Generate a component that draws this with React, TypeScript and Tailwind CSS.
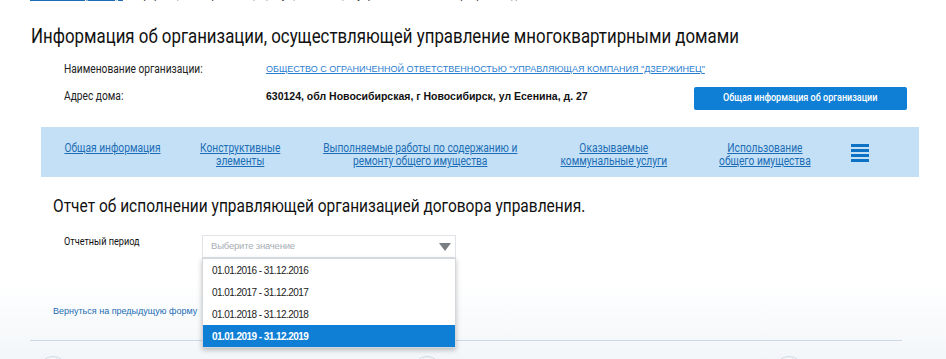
import React from "react";

const roboto = { fontFamily: "Roboto, 'Noto Sans', sans-serif" } as React.CSSProperties;
const arial = { fontFamily: "'Liberation Sans', Arial, sans-serif" } as React.CSSProperties;

function NavLink({ lines, width }: { lines: string[]; width: string }) {
  return (
    <div className={`${width} shrink-0 flex justify-center`}>
      <a
        className="inline-block origin-center scale-x-[0.85] whitespace-nowrap text-center text-[12px] leading-[13px] text-[#1c6db5] underline"
        style={roboto}
        href="#"
      >
        {lines.map((l, i) => (
          <div key={i}>{l}</div>
        ))}
      </a>
    </div>
  );
}

export default function App() {
  const options = ["01.01.2016 - 31.12.2016", "01.01.2017 - 31.12.2017", "01.01.2018 - 31.12.2018", "01.01.2019 - 31.12.2019"];
  return (
    <div className="relative w-[946px] h-[359px] overflow-hidden bg-gradient-to-b from-white from-[78%] to-[#f3f6f9]">
      {/* breadcrumb */}
      <div className="flex items-center h-[14px] mt-[-11px] pl-[30px] whitespace-nowrap text-[11px] leading-[14px]" style={roboto}>
        <a href="#" className="w-[75px] shrink-0 text-[#1c6db5] underline">Главная страница</a>
        <span className="w-[20px] shrink-0 text-center text-[9px] text-[#333]">→</span>
        <span className="ml-[3px] inline-block origin-left scale-x-[0.91] text-[#222]">Информация об организации, осуществляющей управление многоквартирными домами</span>
      </div>

      <h1 className="mt-[21px] pl-[31px] h-[24px] flex items-center">
        <span className="inline-block origin-left scale-x-[0.842] whitespace-nowrap text-[20px] leading-[24px] font-normal text-[#111]" style={roboto}>
          Информация об организации, осуществляющей управление многоквартирными домами
        </span>
      </h1>

      <div className="mt-[12px] flex items-center h-[18px] pl-[64px]">
        <div className="w-[202px] shrink-0 flex items-center">
          <span className="inline-block origin-left scale-x-[0.85] whitespace-nowrap text-[12px] leading-[14px] text-[#222]" style={roboto}>Наименование организации:</span>
        </div>
        <a href="#" className="whitespace-nowrap text-[9px] leading-[12px] text-[#2a7ecf] underline" style={arial}>
          ОБЩЕСТВО С ОГРАНИЧЕННОЙ ОТВЕТСТВЕННОСТЬЮ "УПРАВЛЯЮЩАЯ КОМПАНИЯ "ДЗЕРЖИНЕЦ"
        </a>
      </div>

      <div className="mt-[8px] flex items-center h-[24px] pl-[64px]">
        <div className="w-[202px] shrink-0 flex items-center mt-[-4px]">
          <span className="inline-block origin-left scale-x-[0.85] whitespace-nowrap text-[12px] leading-[14px] text-[#222]" style={roboto}>Адрес дома:</span>
        </div>
        <div className="w-[428px] shrink-0 mt-[-4px] whitespace-nowrap text-[10.5px] leading-[14px] font-bold text-[#111]" style={arial}>
          630124, обл Новосибирская, г Новосибирск, ул Есенина, д. 27
        </div>
        <button className="w-[213px] h-[23px] shrink-0 rounded-[2px] bg-[#0f7fd6] flex items-center justify-center">
          <span className="inline-block origin-center scale-x-[0.82] whitespace-nowrap text-white text-[11px] leading-[14px] font-medium" style={roboto}>
            Общая информация об организации
          </span>
        </button>
      </div>

      {/* nav */}
      <div className="mt-[17px] ml-[41px] w-[878px] h-[50px] bg-[#c3e0f6] flex items-start pt-[15px]">
        <NavLink lines={["Общая информация"]} width="w-[143px]" />
        <NavLink lines={["Конструктивные", "элементы"]} width="w-[112px]" />
        <NavLink lines={["Выполняемые работы по содержанию и", "ремонту общего имущества"]} width="w-[248px]" />
        <NavLink lines={["Оказываемые", "коммунальные услуги"]} width="w-[140px]" />
        <NavLink lines={["Использование", "общего имущества"]} width="w-[162px]" />
        <div className="ml-[5px] mt-[2px] flex flex-col gap-[2px] w-[18px]">
          <div className="h-[3px] bg-[#0d72c4]" />
          <div className="h-[3px] bg-[#0d72c4]" />
          <div className="h-[3px] bg-[#0d72c4]" />
          <div className="h-[3px] bg-[#0d72c4]" />
        </div>
      </div>

      <h2 className="mt-[18px] pl-[53px] h-[22px] flex items-center">
        <span className="inline-block origin-left scale-x-[0.86] whitespace-nowrap text-[18px] leading-[22px] font-normal text-[#111]" style={roboto}>
          Отчет об исполнении управляющей организацией договора управления.
        </span>
      </h2>

      <div className="mt-[18px] flex pl-[64px] h-[23px]">
        <div className="w-[138px] shrink-0 h-[13px] flex items-center">
          <span className="inline-block origin-left scale-x-[0.83] whitespace-nowrap text-[11px] leading-[13px] text-[#111]" style={roboto}>Отчетный период</span>
        </div>
        <div className="relative w-[254px] shrink-0">
          <div className="h-[23px] border border-[#e0e3e7] bg-white flex items-center justify-between pl-[8px] pr-[4px] shadow-[0_1px_1px_rgba(0,0,0,0.04)]">
            <span className="text-[9.5px] tracking-[-0.2px] text-[#a8aeb5]" style={arial}>Выберите значение</span>
            <svg width="12" height="8" viewBox="0 0 12 8"><path d="M0 0 H12 L6 8 Z" fill="#7a7f85" /></svg>
          </div>
          <div className="absolute left-0 top-[23px] w-[254px] bg-white border border-[#d4d7db] shadow-[0_2px_5px_rgba(0,0,0,0.25)] z-10">
            {options.map((o, i) => (
              <div
                key={o}
                className={`h-[22px] flex items-center pl-[9px] text-[10px] tracking-[-0.55px] ${i === 3 ? "bg-[#0f7fd6] text-white font-bold" : "text-[#222]"}`}
                style={arial}
              >
                {o}
              </div>
            ))}
          </div>
        </div>
      </div>

      <div className="mt-[38px] pl-[53px] h-[14px]">
        <a href="#" className="text-[9px] text-[#1c6db5]" style={arial}>Вернуться на предыдущую форму</a>
      </div>

      <div className="mt-[30px] ml-[30px] w-[872px] h-px bg-[#c9d9e7]" />

      <div className="relative h-[20px]">
        {[53, 427, 789].map((x) => (
          <div key={x} className="absolute top-[15px] w-[30px] h-[30px] rounded-full border border-[#cdd9e4]" style={{ left: x - 15 }} />
        ))}
      </div>
    </div>
  );
}
